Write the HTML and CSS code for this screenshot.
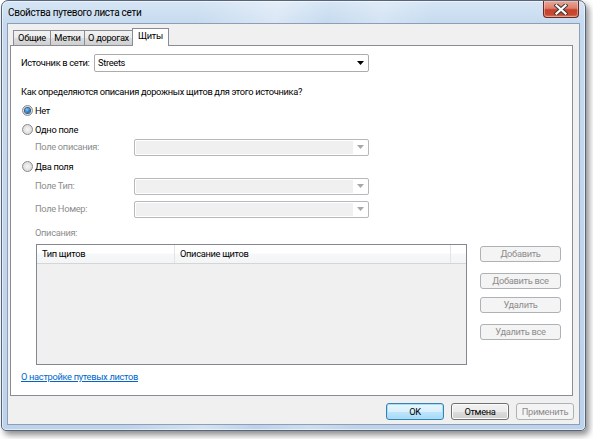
FILE: index.html
```html
<!DOCTYPE html>
<html lang="ru">
<head>
<meta charset="utf-8">
<title>Свойства путевого листа сети</title>
<link rel="stylesheet" href="styles.css">
</head>
<body>
<div class="window">
  <div class="titlebar">
    <span class="title">Свойства путевого листа сети</span>
    <div class="close">
      <svg width="14" height="11" viewBox="0 0 14 11">
        <path d="M2.5 1.5 L11.5 9.5 M11.5 1.5 L2.5 9.5" stroke="#3b3b3b" stroke-width="4.2" stroke-linecap="square" fill="none"/>
        <path d="M2.5 1.5 L11.5 9.5 M11.5 1.5 L2.5 9.5" stroke="#ffffff" stroke-width="2.2" stroke-linecap="square" fill="none"/>
      </svg>
    </div>
  </div>
  <div class="client">
    <div class="tabs">
      <div class="tab t1">Общие</div>
      <div class="tab t2">Метки</div>
      <div class="tab t3">О дорогах</div>
      <div class="tab active">Щиты</div>
    </div>
    <div class="panel">
      <div class="row source">
        <span class="lbl src-lbl">Источник в сети:</span>
        <div class="combo src-combo">
          <span class="combo-text">Streets</span>
          <span class="combo-btn"><svg width="7" height="4" viewBox="0 0 7 4"><path d="M0 0h7L3.5 4z" fill="#000"/></svg></span>
        </div>
      </div>
      <div class="row question">Как определяются описания дорожных щитов для этого источника?</div>
      <div class="row radio r-none"><span class="dot checked"></span>Нет</div>
      <div class="row radio r-one"><span class="dot"></span>Одно поле</div>
      <div class="row field f-desc">
        <span class="lbl sub-lbl">Поле описания:</span>
        <div class="combo disabled">
          <span class="combo-text"></span>
          <span class="combo-btn"><svg width="7" height="4" viewBox="0 0 7 4"><path d="M0 0h7L3.5 4z" fill="#a8a8a8"/></svg></span>
        </div>
      </div>
      <div class="row radio r-two"><span class="dot"></span>Два поля</div>
      <div class="row field f-type">
        <span class="lbl sub-lbl">Поле Тип:</span>
        <div class="combo disabled">
          <span class="combo-text"></span>
          <span class="combo-btn"><svg width="7" height="4" viewBox="0 0 7 4"><path d="M0 0h7L3.5 4z" fill="#a8a8a8"/></svg></span>
        </div>
      </div>
      <div class="row field f-num">
        <span class="lbl sub-lbl">Поле Номер:</span>
        <div class="combo disabled">
          <span class="combo-text"></span>
          <span class="combo-btn"><svg width="7" height="4" viewBox="0 0 7 4"><path d="M0 0h7L3.5 4z" fill="#a8a8a8"/></svg></span>
        </div>
      </div>
      <div class="row desc-lbl">Описания:</div>
      <div class="list-area">
        <div class="list">
          <div class="list-head">
            <div class="col c1">Тип щитов</div>
            <div class="col c2">Описание щитов</div>
            <div class="col c3"></div>
          </div>
        </div>
        <div class="side-btns">
          <div class="btn disabled b-add">Добавить</div>
          <div class="btn disabled b-addall">Добавить все</div>
          <div class="btn disabled b-del">Удалить</div>
          <div class="btn disabled b-delall">Удалить все</div>
        </div>
      </div>
      <div class="row link-row"><a class="link" href="#">О настройке путевых листов</a></div>
    </div>
    <div class="footer">
      <div class="btn default">OK</div>
      <div class="btn normal">Отмена</div>
      <div class="btn disabled">Применить</div>
    </div>
  </div>
</div>
</body>
</html>
```

FILE: styles.css
```css
* { box-sizing: border-box; }
html, body { margin: 0; padding: 0; background: #ffffff; }
body {
  font-family: Roboto, "Noto Sans", sans-serif;
  font-size: 9.3px;
  letter-spacing: -0.32px;
  color: #000;
  width: 593px;
  height: 439px;
  overflow: hidden;
}

.window {
  margin-left: 1px;
  width: 585px;
  height: 431px;
  border: 1px solid #56657a;
  border-radius: 7px 7px 5px 5px;
  background:
    linear-gradient(100deg, rgba(255,255,255,0) 30%, rgba(255,255,255,0.35) 42%, rgba(255,255,255,0) 50%, rgba(255,255,255,0.25) 58%, rgba(255,255,255,0) 66%),
    linear-gradient(to bottom, #d6e5f5 0px, #c6daef 22px, #bdd3eb 100%);
  box-shadow: inset 0 0 0 1px rgba(255,255,255,0.55), 3px 4px 6px rgba(0,0,0,0.45);
  padding: 0 5px 5px 5px;
  display: flex;
  flex-direction: column;
}

.titlebar {
  height: 22px;
  display: flex;
  align-items: flex-start;
  justify-content: space-between;
}
.title {
  padding-left: 1px;
  margin-top: 5px;
  font-size: 10px;
  letter-spacing: -0.3px;
  line-height: 13px;
  color: #000;
}
.close {
  width: 36px;
  height: 17px;
  margin-right: 1px;
  border: 1px solid #6b2a1f;
  border-top: none;
  border-radius: 0 0 4px 4px;
  background: linear-gradient(to bottom, #e9a898 0%, #dd7f6a 45%, #c8412b 55%, #c64a33 85%, #d87a5c 100%);
  box-shadow: inset 0 0 0 1px rgba(255,220,210,0.45);
  display: flex;
  align-items: center;
  justify-content: center;
}

.client {
  width: 573px;
  height: 403px;
  border: 1px solid #8e9fb5;
  background: #f0f0f0;
  display: flex;
  flex-direction: column;
}

.tabs {
  display: flex;
  align-items: flex-end;
  height: 17px;
  margin-top: 4px;
  margin-left: 5px;
  position: relative;
  z-index: 2;
}
.tab {
  height: 15px;
  padding: 0;
  border: 1px solid #898c95;
  border-bottom: none;
  border-left: none;
  background: linear-gradient(to bottom, #f2f2f2 0%, #ebebeb 50%, #dddddd 51%, #cfcfcf 100%);
  line-height: 14px;
  display: flex;
  align-items: center;
  justify-content: center;
  white-space: nowrap;
}
.t1 { border-left: 1px solid #898c95; width: 38px; }
.t2 { width: 34px; }
.t3 { width: 48px; }
.tab.active {
  width: 37px;
  height: 18px;
  margin-left: -1px;
  margin-bottom: -1px;
  border-left: 1px solid #898c95;
  background: #ffffff;
  padding: 0 0 2px 0;
}

.panel {
  margin-left: 2px;
  width: 563px;
  height: 351px;
  border: 1px solid #898c95;
  background: #ffffff;
  padding-left: 10px;
  display: flex;
  flex-direction: column;
}

.row {
  display: flex;
  align-items: center;
  height: 14px;
  line-height: 14px;
  white-space: nowrap;
}
.source { height: 18px; margin-top: 8px; }
.question { margin-top: 13px; }
.r-none { margin-top: 5px; }
.r-one { margin-top: 5px; }
.f-desc { height: 17px; margin-top: 2px; }
.r-two { margin-top: 4px; }
.f-type { height: 17px; margin-top: 4px; }
.f-num { height: 17px; margin-top: 6px; }
.desc-lbl { margin-top: 8px; padding-left: 14px; color: #8d8d8d; }
.link-row { margin-top: 5px; }

.lbl { display: inline-block; }
.src-lbl { width: 73px; }
.sub-lbl { width: 99px; margin-left: 14px; color: #8d8d8d; }

.combo {
  height: 100%;
  border: 1px solid #b4b4b4;
  border-radius: 2px;
  display: flex;
  align-items: stretch;
  background: #fff;
}
.src-combo { width: 275px; border-color: #acacac; }
.field .combo { width: 235px; }
.combo-text { flex: 1; padding-left: 3px; display: flex; align-items: center; }
.combo-btn { width: 15px; display: flex; align-items: center; justify-content: center; }
.combo.disabled { border-color: #b6b8bb; }
.combo.disabled .combo-text { background: #f0f0f0; margin: 1px 0 1px 1px; }

.radio { padding-left: 1px; }
.dot {
  width: 11px;
  height: 11px;
  border-radius: 50%;
  border: 1px solid #8a8a8a;
  background: radial-gradient(circle at 50% 50%, #f6f6f6 0%, #e6e6e6 45%, #cfcfcf 100%);
  margin-right: 2px;
  display: flex;
  align-items: center;
  justify-content: center;
  flex: none;
}
.dot.checked::after {
  content: "";
  width: 5px;
  height: 5px;
  border-radius: 50%;
  background: radial-gradient(circle at 40% 35%, #7fd2fb 0%, #2b78c2 55%, #123f7a 100%);
  box-shadow: 0 0 0 1px #355c8e;
}

.list-area {
  display: flex;
  margin-top: 4px;
  margin-left: 15px;
  height: 121px;
}
.list {
  width: 431px;
  height: 121px;
  border: 1px solid #828790;
  background: #f0f0f0;
}
.list-head {
  display: flex;
  height: 19px;
  background: linear-gradient(to bottom, #ffffff 0%, #ffffff 45%, #f6f7f8 50%, #f4f5f6 100%);
  border-bottom: 1px solid #d5d5d5;
}
.col { display: flex; align-items: center; padding-left: 5px; height: 100%; }
.c1 { width: 138px; border-right: 1px solid #e3e4e6; }
.c2 { width: 276px; padding-left: 5px; border-right: 1px solid #e3e4e6; }
.c3 { flex: 1; }

.side-btns {
  margin-left: 13px;
  display: flex;
  flex-direction: column;
  width: 81px;
}
.side-btns .btn { width: 81px; height: 16px; }
.b-add { margin-top: 2px; }
.b-addall { margin-top: 11px; }
.b-del { margin-top: 8px; }
.b-delall { margin-top: 11px; }

.btn {
  display: flex;
  align-items: center;
  justify-content: center;
  border-radius: 3px;
  white-space: nowrap;
}
.btn.disabled {
  border: 1px solid #adb2b5;
  background: #f4f4f4;
  color: #8d8d8d;
}
.btn.default {
  border: 1px solid #3c7fb1;
  background: linear-gradient(to bottom, #eaf6fd 0%, #d9f0fc 50%, #bee6fd 51%, #a7d9f5 100%);
  box-shadow: inset 0 0 0 1px #9fe3fa;
}
.btn.normal {
  border: 1px solid #707070;
  background: linear-gradient(to bottom, #f2f2f2 0%, #ebebeb 50%, #dddddd 51%, #cfcfcf 100%);
  box-shadow: inset 0 0 0 1px #fbfbfb;
}

.link {
  color: #0066cc;
  text-decoration: underline;
}

.footer {
  display: flex;
  justify-content: flex-end;
  gap: 7px;
  margin-top: 7px;
  padding-right: 5px;
}
.footer .btn { width: 58px; height: 17px; }
```
